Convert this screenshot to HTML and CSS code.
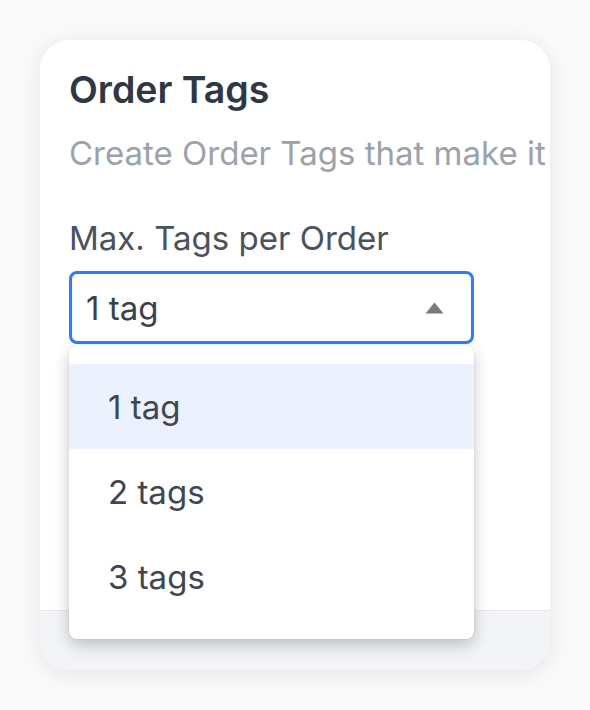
FILE: index.html
```html
<!DOCTYPE html>
<html lang="en">
<head>
    <meta charset="UTF-8">
    <meta name="viewport" content="width=device-width, initial-scale=1.0">
    <title>Order Tags</title>
    <link rel="stylesheet" href="styles.css">
</head>
<body>
    <div class="card">
        <div class="card-body">
            <h2 class="title">Order Tags</h2>
            <p class="subtitle">Create Order Tags that make it easy to organize your orders</p>
            <label class="label">Max. Tags per Order</label>
            <div class="field">
                <div class="select">
                    <span>1 tag</span>
                    <svg class="arrow" width="19" height="12" viewBox="0 0 19 12"><path d="M9.5 0.5 L18.5 11.5 L0.5 11.5 Z" fill="#7a7a7a"/></svg>
                </div>
                <ul class="menu">
                    <li class="active">1 tag</li>
                    <li>2 tags</li>
                    <li>3 tags</li>
                </ul>
            </div>
        </div>
        <div class="card-footer"></div>
    </div>
</body>
</html>
```

FILE: styles.css
```css
body {
    margin: 0;
    padding: 40px;
    background-color: #fafafa;
    font-family: Inter, "Noto Sans", sans-serif;
}
.card {
    width: 510px;
    height: 630px;
    background: #fff;
    border-radius: 30px;
    box-shadow: 0 4px 24px rgba(0, 0, 0, 0.09);
    overflow: hidden;
    display: flex;
    flex-direction: column;
}
.card-body {
    flex: 1;
    padding: 27px 0 0 29px;
    white-space: nowrap;
}
.title {
    margin: 0;
    font-size: 37.5px;
    line-height: 46px;
    font-weight: 600;
    color: #2f3746;
}
.subtitle {
    margin: 20px 0 0;
    font-size: 33px;
    line-height: 40px;
    color: #9ca2ac;
}
.label {
    display: block;
    margin-top: 45px;
    font-size: 33px;
    line-height: 40px;
    color: #4a5160;
}
.field {
    position: relative;
    width: 405px;
    margin-top: 13px;
}
.select {
    height: 67px;
    border: 3px solid #2f7df6;
    border-radius: 8px;
    display: flex;
    align-items: center;
    justify-content: space-between;
    padding: 0 27px 0 14px;
    font-size: 33px;
    color: #3a414d;
}
.menu {
    position: absolute;
    top: 75px;
    left: 0;
    width: 405px;
    margin: 0;
    padding: 18px 0 20px;
    list-style: none;
    background: #fff;
    border-radius: 8px;
    box-shadow: 0 6px 16px rgba(0, 0, 0, 0.22), 0 0 3px rgba(0, 0, 0, 0.08);
}
.menu li {
    height: 85px;
    display: flex;
    align-items: center;
    padding-left: 39px;
    font-size: 33px;
    color: #3f4652;
}
.menu li.active {
    background: #ebf2fe;
}
.card-footer {
    height: 59px;
    background: #f3f4f7;
    border-top: 1px solid #e6e8ee;
}
```
